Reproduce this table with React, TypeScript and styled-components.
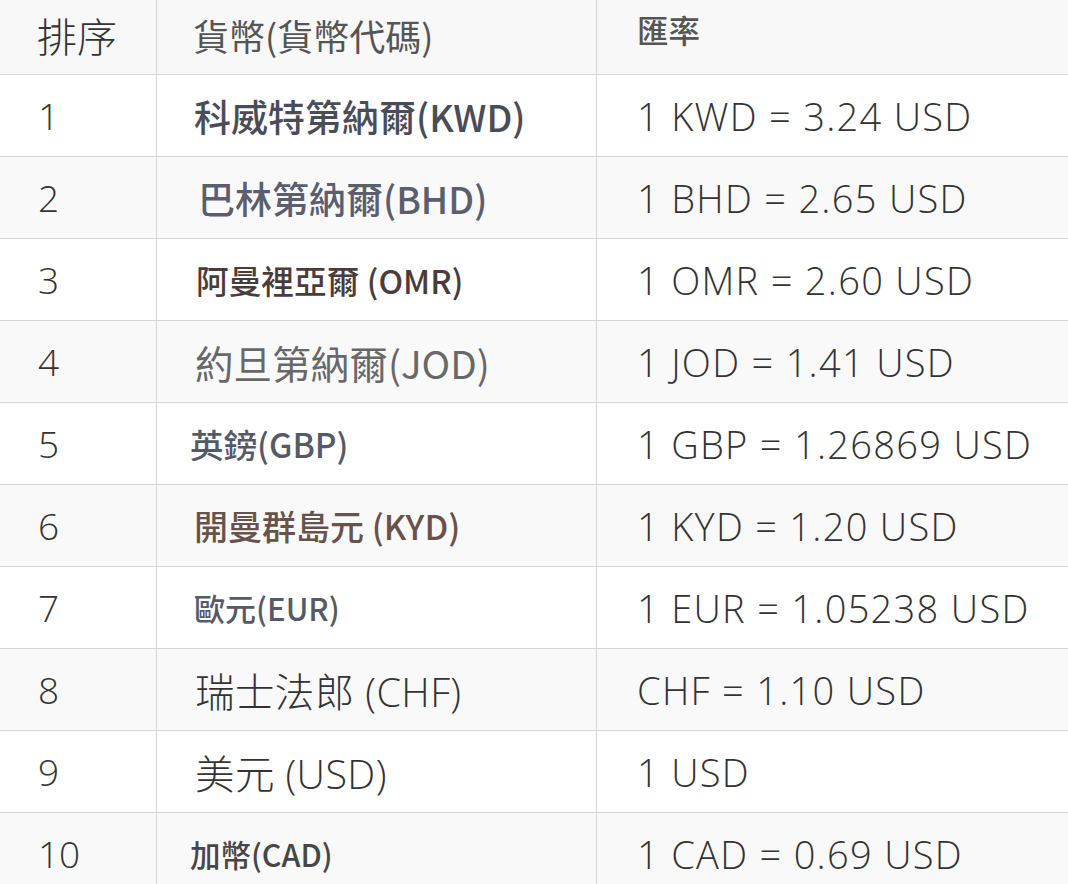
import React from "react";
import styled, { createGlobalStyle } from "styled-components";

const GlobalStyle = createGlobalStyle`
  html, body { margin: 0; padding: 0; background: #ffffff; }
  body { font-family: "Open Sans", "Noto Sans CJK TC", sans-serif; }
`;

const Table = styled.div`
  width: 1068px;
  display: flex;
  flex-direction: column;
`;

const Row = styled.div<{ $header?: boolean; $shade?: boolean }>`
  display: grid;
  grid-template-columns: 156px 440px 1fr;
  height: ${(p) => (p.$header ? 74 : 81)}px;
  border-bottom: 1px solid #d6d6da;
  background: ${(p) => (p.$header ? "#f8f8f9" : p.$shade ? "#f9f9fa" : "#ffffff")};
`;

const Cell = styled.div<{ $divider?: boolean; $pad?: number }>`
  display: flex;
  align-items: center;
  padding-left: ${(p) => p.$pad ?? 38}px;
  border-left: ${(p) => (p.$divider ? "1px solid #d6d6da" : "none")};
  white-space: nowrap;
  overflow: hidden;
`;

const RankText = styled.span`
  font-family: "Open Sans", sans-serif;
  font-weight: 300;
  font-size: 37px;
  color: #333333;
`;

const RankHead = styled.span`
  font-family: "Noto Sans CJK TC", sans-serif;
  font-weight: 300;
  font-size: 40px;
  color: #333333;
  margin-top: -4px;
`;

const ColHead = styled.span<{ $size: number; $weight: number; $lift?: number }>`
  font-family: "Noto Sans CJK TC", sans-serif;
  font-size: ${(p) => p.$size}px;
  font-weight: ${(p) => p.$weight};
  color: #555555;
  margin-top: ${(p) => -(p.$lift ?? 0)}px;
`;

const CurrencyName = styled.span<{ $size: number; $weight: number; $color: string; $light?: boolean }>`
  font-family: ${(p) =>
    p.$light ? `"Open Sans", "Noto Sans CJK TC", sans-serif` : `"Noto Sans CJK TC", sans-serif`};
  font-size: ${(p) => p.$size}px;
  font-weight: ${(p) => p.$weight};
  letter-spacing: ${(p) => (p.$light ? "0.4px" : "0")};
  color: ${(p) => p.$color};
`;

const RateText = styled.span`
  font-family: "Open Sans", sans-serif;
  font-weight: 300;
  font-size: 38px;
  letter-spacing: 1.3px;
  color: #333333;
`;

type Item = {
  rank: number;
  name: string;
  rate: string;
  size: number;
  weight: number;
  color: string;
  pad: number;
  light?: boolean;
};

const items: Item[] = [
  { rank: 1, name: "科威特第納爾(KWD)", rate: "1 KWD = 3.24 USD", size: 37, weight: 500, color: "#4a4c58", pad: 37 },
  { rank: 2, name: "巴林第納爾(BHD)", rate: "1 BHD = 2.65 USD", size: 37, weight: 500, color: "#5b5f6d", pad: 41 },
  { rank: 3, name: "阿曼裡亞爾 (OMR)", rate: "1 OMR = 2.60 USD", size: 32.7, weight: 500, color: "#4b3c3c", pad: 39 },
  { rank: 4, name: "約旦第納爾(JOD)", rate: "1 JOD = 1.41 USD", size: 38.6, weight: 400, color: "#686868", pad: 38 },
  { rank: 5, name: "英鎊(GBP)", rate: "1 GBP = 1.26869 USD", size: 33.5, weight: 500, color: "#565a66", pad: 33 },
  { rank: 6, name: "開曼群島元 (KYD)", rate: "1 KYD = 1.20 USD", size: 34, weight: 500, color: "#69524b", pad: 37 },
  { rank: 7, name: "歐元(EUR)", rate: "1 EUR = 1.05238 USD", size: 31, weight: 500, color: "#555a69", pad: 37 },
  { rank: 8, name: "瑞士法郎 (CHF)", rate: "CHF = 1.10 USD", size: 39.5, weight: 300, color: "#333333", pad: 38, light: true },
  { rank: 9, name: "美元 (USD)", rate: "1 USD", size: 39.5, weight: 300, color: "#333333", pad: 38, light: true },
  { rank: 10, name: "加幣(CAD)", rate: "1 CAD = 0.69 USD", size: 30.5, weight: 500, color: "#474747", pad: 33 },
];

export default function App() {
  return (
    <>
      <GlobalStyle />
      <Table>
        <Row $header>
          <Cell $pad={37}>
            <RankHead>排序</RankHead>
          </Cell>
          <Cell $divider $pad={36}>
            <ColHead $size={36} $weight={400} $lift={4}>貨幣(貨幣代碼)</ColHead>
          </Cell>
          <Cell $divider $pad={40}>
            <ColHead $size={31.5} $weight={500} $lift={17}>匯率</ColHead>
          </Cell>
        </Row>
        {items.map((it) => (
          <Row key={it.rank} $shade={it.rank % 2 === 0}>
            <Cell>
              <RankText>{it.rank}</RankText>
            </Cell>
            <Cell $divider $pad={it.pad}>
              <CurrencyName $size={it.size} $weight={it.weight} $color={it.color} $light={it.light}>
                {it.name}
              </CurrencyName>
            </Cell>
            <Cell $divider $pad={40}>
              <RateText>{it.rate}</RateText>
            </Cell>
          </Row>
        ))}
      </Table>
    </>
  );
}
